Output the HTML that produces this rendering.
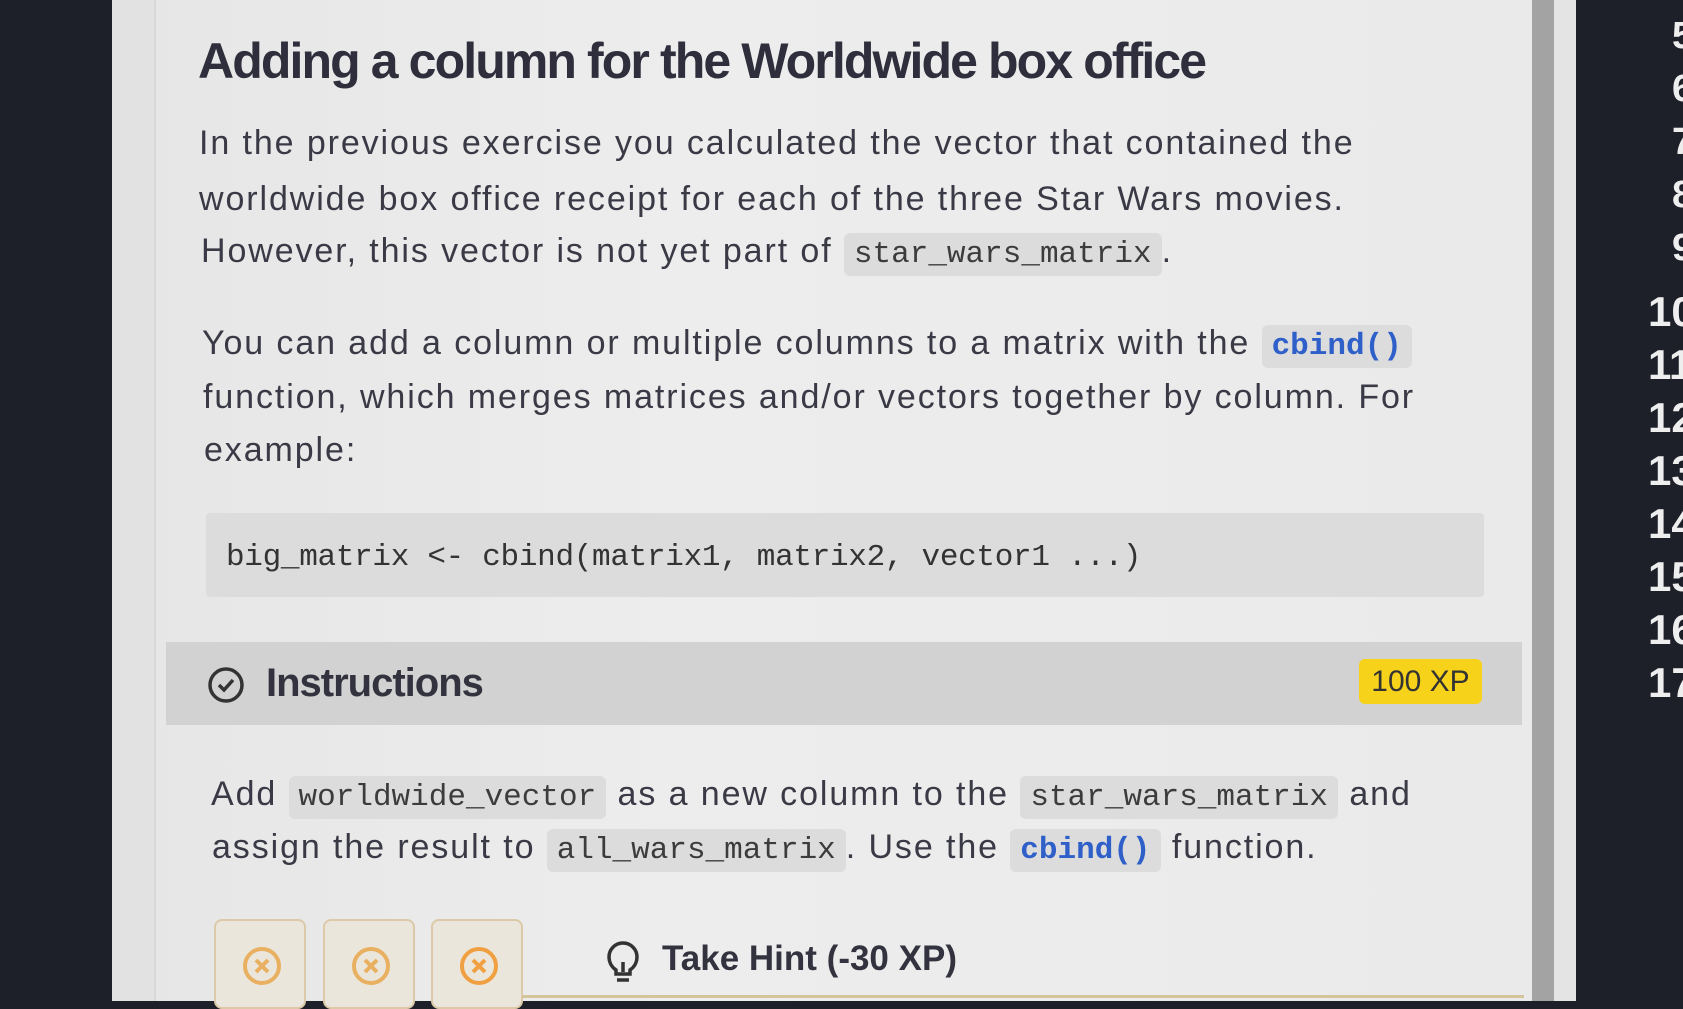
<!DOCTYPE html>
<html><head><style>
*{margin:0;padding:0;box-sizing:border-box}
body{width:1683px;height:1001px;overflow:hidden;background:#1d2029;position:relative;font-family:"Liberation Sans",sans-serif;color:#3a3a46}
.panel{position:absolute;left:112px;top:0;width:1422px;height:1001px;background:linear-gradient(90deg,#e6e6e6,#ededed 40%,#eaeaea)}
.edge{position:absolute;left:112px;top:0;width:44px;height:1001px;background:#e2e2e2;border-right:2px solid #d8d8d8}
.gbar{position:absolute;left:1532px;top:0;width:22px;height:1001px;background:#a3a3a3}
.wbar{position:absolute;left:1554px;top:0;width:22px;height:1001px;background:#e4e4e4}
.ln{position:absolute;left:1648px;font-size:42px;font-weight:bold;color:#eee;line-height:53px;top:285px}
.ln2{position:absolute;left:1672px;font-size:38px;font-weight:bold;color:#eee;line-height:53px;top:10px}
.t{position:absolute;white-space:nowrap}
h1{position:absolute;left:198px;top:32px;font-size:50px;font-weight:bold;letter-spacing:-1.9px;color:#2e2e3c}
.p{font-size:34px;letter-spacing:1.9px}
code{font-family:"Liberation Mono",monospace;background:#dcdcdc;border-radius:6px;padding:4px 10px;font-size:31px;color:#3c3c3c;letter-spacing:0}
code.b{color:#2f5fc8;font-weight:bold}
.cb{position:absolute;left:206px;top:513px;width:1278px;height:84px;background:#dcdcdc;border-radius:4px}
.cb span{position:absolute;left:20px;top:27px;font-family:"Liberation Mono",monospace;font-size:31px;color:#333;letter-spacing:-0.3px}
.ib{position:absolute;left:166px;top:642px;width:1356px;height:83px;background:#d2d2d2}
.xp{position:absolute;left:1359px;top:659px;width:123px;height:45px;background:#f6d21a;border-radius:6px;font-size:30px;text-align:center;line-height:45px;color:#333}
.btn{position:absolute;top:919px;width:92px;height:90px;background:#ebe6dc;border:2px solid #dcc9a8;border-radius:8px}
.btn svg{position:absolute;left:25px;top:24px}
.hl{position:absolute;left:522px;top:995px;width:1002px;height:3px;background:#d4c49a}
</style></head><body>
<div class="panel"></div><div class="edge"></div><div class="gbar"></div><div class="wbar"></div>
<div class="ln2">5<br>6<br>7<br>8<br>9</div>
<div class="ln">10<br>11<br>12<br>13<br>14<br>15<br>16<br>17</div>
<h1>Adding a column for the Worldwide box office</h1>
<div class="t p" style="left:199px;top:124px">In the previous exercise you calculated the vector that contained the</div>
<div class="t p" style="left:199px;top:180px">worldwide box office receipt for each of the three Star Wars movies.</div>
<div class="t p" style="left:201px;top:232px">However, this vector is not yet part of <code>star_wars_matrix</code>.</div>
<div class="t p" style="left:202px;top:324px">You can add a column or multiple columns to a matrix with the <code class="b">cbind()</code></div>
<div class="t p" style="left:203px;top:378px">function, which merges matrices and/or vectors together by column. For</div>
<div class="t p" style="left:204px;top:431px">example:</div>
<div class="cb"><span>big_matrix &lt;- cbind(matrix1, matrix2, vector1 ...)</span></div>
<div class="ib"></div>
<svg class="t" style="left:207px;top:666px" width="38" height="38" viewBox="0 0 38 38"><circle cx="19" cy="19" r="16" fill="none" stroke="#333" stroke-width="3.5"/><path d="M12 19l5 5 9-10" fill="none" stroke="#333" stroke-width="3.5"/></svg>
<div class="t" style="left:266px;top:661px;font-size:40px;font-weight:bold;color:#33333f;letter-spacing:-1px">Instructions</div>
<div class="xp">100 XP</div>
<div class="t p" style="left:211px;top:775px">Add <code>worldwide_vector</code> as a new column to the <code>star_wars_matrix</code> and</div>
<div class="t p" style="left:212px;top:828px">assign the result to <code>all_wars_matrix</code>. Use the <code class="b">cbind()</code> function.</div>
<div class="btn" style="left:214px"><svg width="42" height="42" viewBox="0 0 42 42"><circle cx="21" cy="21" r="17" fill="none" stroke="#e8b060" stroke-width="4"/><path d="M15 15l12 12M27 15l-12 12" stroke="#e8b060" stroke-width="4"/></svg></div>
<div class="btn" style="left:323px"><svg width="42" height="42" viewBox="0 0 42 42"><circle cx="21" cy="21" r="17" fill="none" stroke="#e8b060" stroke-width="4"/><path d="M15 15l12 12M27 15l-12 12" stroke="#e8b060" stroke-width="4"/></svg></div>
<div class="btn" style="left:431px"><svg width="42" height="42" viewBox="0 0 42 42"><circle cx="21" cy="21" r="17" fill="none" stroke="#f0a040" stroke-width="4"/><path d="M15 15l12 12M27 15l-12 12" stroke="#f0a040" stroke-width="4"/></svg></div>
<svg class="t" style="left:606px;top:940px" width="34" height="44" viewBox="0 0 34 44"><path d="M10 30C4 26 3 20 3 17a14 14 0 0128 0c0 3-1 9-7 13v4H10z" fill="none" stroke="#333" stroke-width="3.5"/><path d="M17 22v10M11 40h12" stroke="#333" stroke-width="3.5"/></svg>
<div class="t" style="left:662px;top:939px;font-size:35px;font-weight:bold;color:#33333f">Take Hint (-30 XP)</div>
<div class="hl"></div>
</body></html>
